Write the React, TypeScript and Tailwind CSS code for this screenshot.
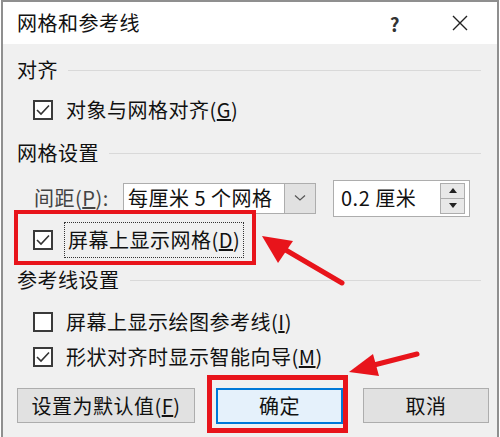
import { ReactNode } from "react";

function Check({ checked }: { checked: boolean }) {
  return (
    <span className="w-[20px] h-[20px] shrink-0 border-2 border-[#3a3a3a] bg-white flex items-center justify-center">
      {checked && (
        <svg width="16" height="16" viewBox="0 0 16 16">
          <path d="M2 8 L6 12 L14 3.5" fill="none" stroke="#333" strokeWidth="1.6" />
        </svg>
      )}
    </span>
  );
}

function Section({ title }: { title: string }) {
  return (
    <div className="h-[28px] flex items-center gap-[10px] pl-[3px]">
      <span>{title}</span>
      <div className="flex-1 h-px bg-[#d9d9d9] mr-[8px]" />
    </div>
  );
}

function Row({ checked, children, className = "" }: { checked: boolean; children: ReactNode; className?: string }) {
  return (
    <div className={"h-[32px] flex items-center gap-[13px] pl-[19px] " + className}>
      <Check checked={checked} />
      <span>{children}</span>
    </div>
  );
}

export default function App() {
  return (
    <div className="relative w-[500px] h-[437px] overflow-hidden bg-white font-['Noto_Sans_CJK_SC','Microsoft_YaHei',sans-serif] text-[20px] tracking-[0.5px] text-[#111] leading-none">
      <div className="w-[498px] h-[437px] ml-[1px] border-x-2 border-t-2 border-[#8f8f8f] bg-[#f0f0f0] flex flex-col">
        <header className="h-[42px] bg-white flex items-center pl-[14px] shrink-0">
          <span className="flex-1">网格和参考线</span>
          <span className="w-[40px] text-center font-bold text-[19px] text-[#333] mr-[36px]">?</span>
          <svg width="18" height="18" viewBox="0 0 18 18" className="mr-[28px]">
            <path d="M2 2 L16 16 M16 2 L2 16" stroke="#222" strokeWidth="1.4" />
          </svg>
        </header>

        <div className="flex flex-col pl-[11px] pr-[8px]">
          <div className="mt-[12px]">
            <Section title="对齐" />
          </div>
          <Row checked className="mt-[10px]">
            对象与网格对齐(<u>G</u>)
          </Row>

          <div className="mt-[13px]">
            <Section title="网格设置" />
          </div>
          <div className="mt-[13px] h-[36px] flex items-center pl-[20px]">
            <span className="w-[89px] text-[#444]">
              间距(<u>P</u>):
            </span>
            <div className="w-[193px] h-[31px] bg-white border border-[#adadad] flex items-center">
              <span className="flex-1 pl-[4px] whitespace-nowrap">每厘米 5 个网格</span>
              <span className="w-[31px] h-full bg-[#e1e1e1] border-l border-[#adadad] flex items-center justify-center">
                <svg width="12" height="8" viewBox="0 0 12 8">
                  <path d="M1 1.5 L6 6 L11 1.5" fill="none" stroke="#555" strokeWidth="1.2" />
                </svg>
              </span>
            </div>
            <div className="ml-[17px] w-[137px] h-[37px] bg-white border border-[#adadad] flex items-center">
              <span className="flex-1 pl-[7px] whitespace-nowrap">0.2 厘米</span>
              <div className="w-[25px] h-[31px] mr-[4px] flex flex-col border border-[#adadad]">
                <span className="flex-1 bg-[#e8e8e8] border-b border-[#adadad] flex items-center justify-center">
                  <svg width="8" height="5" viewBox="0 0 8 5"><path d="M0 5 L4 0 L8 5 Z" fill="#222" /></svg>
                </span>
                <span className="flex-1 bg-[#e8e8e8] flex items-center justify-center">
                  <svg width="8" height="5" viewBox="0 0 8 5"><path d="M0 0 L4 5 L8 0 Z" fill="#222" /></svg>
                </span>
              </div>
            </div>
          </div>

          <div className="mt-[6px] h-[36px] flex items-center gap-[11px] pl-[19px]">
            <Check checked />
            <span className="h-[36px] px-[3px] flex items-center border border-dotted border-[#333]">
              屏幕上显示网格(<u>D</u>)
            </span>
          </div>

          <div className="mt-[8px]">
            <Section title="参考线设置" />
          </div>
          <Row checked={false} className="mt-[12px]">
            屏幕上显示绘图参考线(<u>I</u>)
          </Row>
          <Row checked className="mt-[3px]">
            形状对齐时显示智能向导(<u>M</u>)
          </Row>

          <div className="mt-[15px] h-[35px] flex items-center pl-[3px]">
            <button className="w-[178px] h-[35px] bg-[#e1e1e1] border border-[#adadad] text-[20px] tracking-[0.5px]">
              设置为默认值(<u>F</u>)
            </button>
            <button className="ml-[21px] w-[127px] h-[36px] bg-[#e5f1fb] border-2 border-[#0078d7] text-[20px] tracking-[0.5px]">
              确定
            </button>
            <button className="ml-[20px] w-[126px] h-[35px] bg-[#e1e1e1] border border-[#adadad] text-[20px] tracking-[0.5px]">
              取消
            </button>
          </div>
        </div>
      </div>

      {/* annotations */}
      <div className="absolute left-[14px] top-[210px] w-[242px] h-[55px] border-[4px] border-[#e8141b]" />
      <div className="absolute left-[207px] top-[375px] w-[141px] h-[58px] border-[5px] border-[#e8141b]" />
      <svg className="absolute left-0 top-0" width="500" height="437" viewBox="0 0 500 437">
        <line x1="342" y1="283" x2="284" y2="249" stroke="#e8141b" strokeWidth="5" strokeLinecap="round" />
        <polygon points="262,236 293,241 278,263" fill="#e8141b" />
        <line x1="417" y1="354" x2="374" y2="365" stroke="#e8141b" strokeWidth="5" strokeLinecap="round" />
        <polygon points="349,372 373,354 379,376" fill="#e8141b" />
      </svg>
    </div>
  );
}
